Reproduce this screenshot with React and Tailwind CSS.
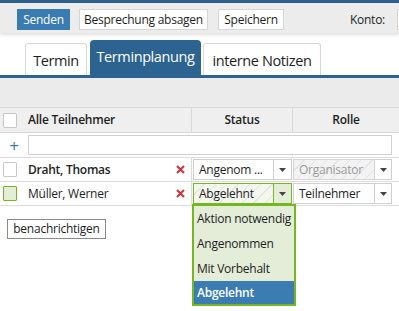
import React from 'react';

function Select({ value, width, arrowWidth, active, disabled }) {
  const box = active
    ? 'border-[#74b71f] bg-[repeating-linear-gradient(135deg,#f4f7f0_0px,#f4f7f0_7px,#e2e6dc_7px,#e2e6dc_8px)]'
    : disabled
    ? 'border-[#d4d4d4] bg-[repeating-linear-gradient(135deg,#f3f3f3_0px,#f3f3f3_7px,#e4e4e4_7px,#e4e4e4_8px)] text-[#9a9a9a]'
    : 'border-[#cfcfcf] bg-white';
  return (
    <div className="flex h-[21px]">
      <div
        className={`flex items-center border px-[5px] whitespace-nowrap overflow-hidden ${box}`}
        style={{ width }}
      >
        {value}
      </div>
      <div
        className={`flex items-center justify-center border border-l-0 ${
          active ? 'border-[#74b71f] border-l bg-[#e3edd8]' : 'border-[#cfcfcf] bg-white'
        }`}
        style={{ width: arrowWidth }}
      >
        <svg width="7" height="4" viewBox="0 0 7 4">
          <path d="M0 0h7L3.5 4z" fill="#444" />
        </svg>
      </div>
    </div>
  );
}

function Checkbox({ green }) {
  return (
    <div
      className={`w-[14px] h-[15px] border rounded-[1px] ${
        green ? 'border-[#74b71f] bg-[#e3edd8]' : 'border-[#c8c8c8] bg-white'
      }`}
    />
  );
}

function Row({ name, bold, green, status, statusActive, role, roleDisabled }) {
  return (
    <div className="flex h-[24px] border-b border-[#dcdcdc] bg-white">
      <div className="w-[192px] flex items-center pl-[3px] border-r border-[#dcdcdc]">
        <Checkbox green={green} />
        <span className={`ml-[11px] flex-1 ${bold ? 'font-semibold' : ''}`}>{name}</span>
        <svg width="9" height="9" viewBox="0 0 9 9" className="mr-[6px]">
          <path d="M1 1l7 7M8 1l-7 7" stroke="#d4313a" strokeWidth="2" />
        </svg>
      </div>
      <div className="w-[101px] flex items-center pl-[1px]">
        <Select value={status} width={81} arrowWidth={18} active={statusActive} />
      </div>
      <div className="flex-1 flex items-center">
        <Select value={role} width={82} arrowWidth={17} disabled={roleDisabled} />
      </div>
    </div>
  );
}

export default function App() {
  return (
    <div className="w-[399px] h-[311px] overflow-hidden relative bg-white text-[12px] tracking-[-0.25px] text-[#1e1e1e] font-['Open_Sans',sans-serif]">
      <div className="h-[3px] bg-[#2d5f8a]" />
      <div className="h-[30px] bg-[#ececec] flex items-start pt-[6px] pl-[17px] shadow-[0_2px_3px_rgba(0,0,0,0.12)] relative z-10">
        <button className="h-[21px] w-[53px] bg-[#3a7cb2] text-white">Senden</button>
        <button className="h-[21px] w-[129px] ml-[9px] bg-white border border-[#d6d6d6]">
          Besprechung absagen
        </button>
        <button className="h-[21px] w-[66px] ml-[10px] bg-white border border-[#d6d6d6]">
          Speichern
        </button>
        <span className="ml-auto mr-[12px] mt-[2px]">Konto:</span>
        <div className="w-[2px] h-[21px] border border-r-0 border-[#d6d6d6] bg-white" />
      </div>

      <div className="h-[42px] flex items-end pl-[25px] text-[14.5px] tracking-[-0.4px] leading-[20px]">
        <div className="w-[62px] h-[32px] border border-b-0 border-[#d8d8d8] rounded-t-[3px] flex justify-center pt-[7px]">
          Termin
        </div>
        <div className="w-[111px] h-[35px] ml-[3px] bg-[#2c6390] text-white rounded-t-[4px] flex justify-center pt-[7px]">
          Terminplanung
        </div>
        <div className="w-[118px] h-[32px] ml-[2px] border border-b-0 border-[#d8d8d8] rounded-t-[3px] flex justify-center pt-[7px]">
          interne Notizen
        </div>
      </div>
      <div className="h-[3px] bg-[#2c6390]" />
      <div className="h-[29px] bg-[#ebebeb]" />

      <div className="flex h-[26px] bg-[#efefef] border-y border-[#d9d9d9] font-semibold">
        <div className="w-[192px] flex items-center pl-[3px] border-r border-[#d9d9d9]">
          <Checkbox />
          <span className="ml-[11px]">Alle Teilnehmer</span>
        </div>
        <div className="w-[101px] flex items-center justify-center border-r border-[#d9d9d9]">Status</div>
        <div className="flex-1 flex items-center justify-center">Rolle</div>
      </div>

      <div className="flex items-center h-[25px] border-b border-[#dcdcdc] bg-white">
        <span className="w-[28px] text-center text-[#3a7ab5] text-[17px] leading-none">+</span>
        <div className="w-[364px] h-[20px] border border-[#d0d0d0] bg-white" />
      </div>

      <Row name="Draht, Thomas" bold status="Angenom ..." role="Organisator" roleDisabled />
      <Row name="Müller, Werner" green status="Abgelehnt" statusActive role="Teilnehmer" />

      <div className="pl-[7px] pt-[13px]">
        <button className="h-[20px] w-[99px] border border-[#8a8a8a] bg-white">benachrichtigen</button>
      </div>

      <div className="absolute left-[192px] top-[204px] w-[104px] border-2 border-[#74b71f] bg-[#e3edd8] font-medium">
        <div className="h-[25px] flex items-center px-[3px] whitespace-nowrap">Aktion notwendig</div>
        <div className="h-[25px] flex items-center px-[3px]">Angenommen</div>
        <div className="h-[25px] flex items-center px-[3px]">Mit Vorbehalt</div>
        <div className="h-[23px] flex items-center px-[3px] bg-[#3b7db2] text-white font-semibold">Abgelehnt</div>
      </div>
    </div>
  );
}
